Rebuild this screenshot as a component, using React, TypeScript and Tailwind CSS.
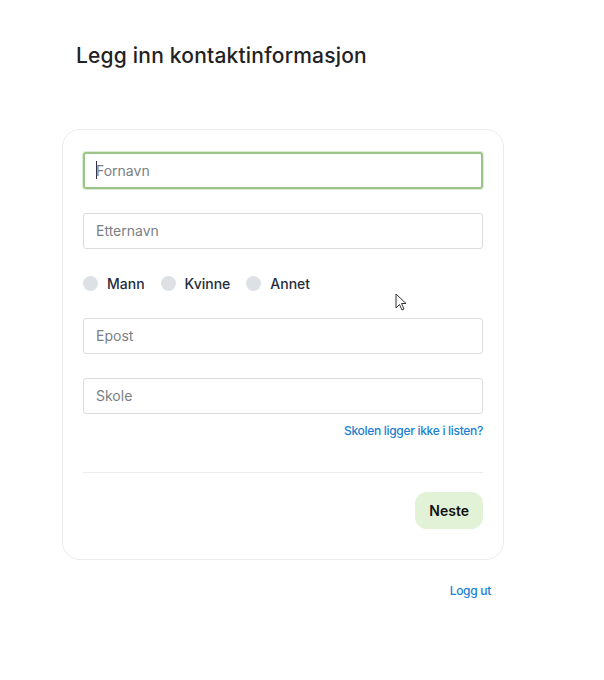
import React from 'react'

function Field({ placeholder, focused }: { placeholder: string; focused?: boolean }) {
  return (
    <div
      className={
        focused
          ? 'h-[37px] w-full rounded-[3px] border-2 border-[#9bc48a] shadow-[0_0_0_1px_#dcebd3] flex items-center px-[11px]'
          : 'h-[36px] w-full rounded-[3px] border border-[#dcdcdc] flex items-center px-[12px]'
      }
    >
      {focused && <span className="w-px h-[18px] bg-[#333] mr-[-1px]" />}
      <span className="text-[14px] text-[#7a7f85]">{placeholder}</span>
    </div>
  )
}

function Radio({ label }: { label: string }) {
  return (
    <label className="flex items-center gap-[9px]">
      <span className="w-[15px] h-[15px] rounded-full bg-[#dde1e6]" />
      <span className="text-[14px] font-medium text-[#1f2d3d]">{label}</span>
    </label>
  )
}

export default function App() {
  return (
    <div className="relative w-[604px] h-[680px] bg-white font-['Inter','Liberation_Sans',sans-serif]">
      <h1 className="pt-[40px] pl-[76px] text-[21px] font-medium text-[#222] tracking-[0.2px]">
        Legg inn kontaktinformasjon
      </h1>

      <div className="ml-[62px] mt-[57px] w-[442px] rounded-[18px] border border-[#ececec] px-[20px] pt-[22px] pb-[30px]">
        <Field placeholder="Fornavn" focused />
        <div className="mt-[24px]">
          <Field placeholder="Etternavn" />
        </div>
        <div className="mt-[27px] flex items-center gap-[16px] h-[16px]">
          <Radio label="Mann" />
          <Radio label="Kvinne" />
          <Radio label="Annet" />
        </div>
        <div className="mt-[26px]">
          <Field placeholder="Epost" />
        </div>
        <div className="mt-[24px]">
          <Field placeholder="Skole" />
        </div>
        <div className="mt-[8px] flex justify-end">
          <a className="text-[12px] font-medium text-[#1b7fd1] tracking-[-0.3px]">Skolen ligger ikke i listen?</a>
        </div>
        <div className="mt-[32px] border-t border-[#ececec]" />
        <div className="mt-[19px] flex justify-end">
          <button className="h-[37px] px-[14px] rounded-[12px] bg-[#e2f2d6] text-[14px] font-semibold text-[#111]">
            Neste
          </button>
        </div>
      </div>

      <div className="w-[491px] mt-[22px] flex justify-end">
        <a className="text-[12px] font-medium text-[#1b7fd1] tracking-[-0.3px]">Logg ut</a>
      </div>

      <svg className="absolute left-[395px] top-[293px]" width="14" height="20" viewBox="0 0 14 20">
        <path d="M1 1 L1 15 L4.5 11.5 L7 17 L9 16 L6.5 10.5 L11 10.5 Z" fill="#fff" stroke="#333" strokeWidth="1" />
      </svg>
    </div>
  )
}
